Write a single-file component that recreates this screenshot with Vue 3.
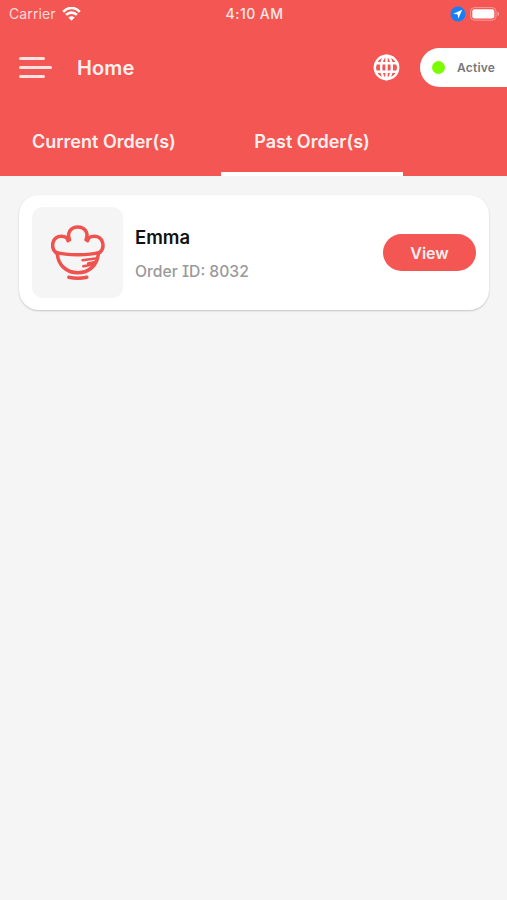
<template>
  <div class="screen">
    <header class="header">
      <div class="status-bar">
        <div class="carrier">
          <span class="carrier-name">Carrier</span>
          <svg class="wifi" width="19" height="14" viewBox="0 0 19 14">
            <path d="M1.2 4.8C6-.3 13-.3 17.8 4.8" />
            <path d="M4.1 7.9c3-3.1 7.8-3.1 10.8 0" />
            <path class="wifi-dot" d="M6.4 10.6c1.7-1.7 4.5-1.7 6.2 0L9.5 13.7z" />
          </svg>
        </div>
        <span class="time">4:10 AM</span>
        <div class="indicators">
          <svg width="16" height="16" viewBox="0 0 16 16">
            <circle cx="8" cy="8" r="7.5" fill="#147efb" />
            <path d="M12.2 3.8 3.3 7.7l4.4.7.6 4.3z" fill="#fff" />
          </svg>
          <svg width="30" height="14" viewBox="0 0 30 14">
            <rect x=".6" y=".6" width="25.4" height="12.6" rx="3.8" fill="none" stroke="#fff" stroke-opacity=".4" />
            <rect x="2.3" y="2.3" width="22" height="9.2" rx="2.2" fill="#fff" />
            <path d="M27.5 4.8c2 .7 2 3.6 0 4.3z" fill="#fff" fill-opacity=".5" />
          </svg>
        </div>
      </div>

      <div class="nav-bar">
        <button class="menu" aria-label="Menu">
          <span class="line short"></span>
          <span class="line"></span>
          <span class="line short"></span>
        </button>
        <h1 class="title">Home</h1>
        <svg class="globe" width="27" height="27" viewBox="0 0 27 27">
          <circle cx="13.5" cy="13.5" r="11.7" />
          <ellipse cx="13.5" cy="13.5" rx="5.4" ry="11.7" />
          <path d="M13.5 1.8v23.4M3 9.2h21M3 17.8h21" />
        </svg>
        <div class="availability">
          <span class="dot"></span>
          <span class="availability-label">Active</span>
        </div>
      </div>

      <nav class="tabs">
        <button
          v-for="tab in tabs"
          :key="tab.id"
          class="tab"
          :class="[tab.id, { selected: tab.id === selected }]"
          @click="selected = tab.id"
        >
          <span class="tab-label">{{ tab.label }}</span>
        </button>
      </nav>
    </header>

    <main class="orders">
      <article v-for="order in orders" :key="order.id" class="card">
        <div class="thumb">
          <svg class="bowl" width="54" height="58" viewBox="0 0 54 58">
            <path d="M4.8 28.4C-.8 23.5 1.2 12.2 10.4 12.2c3.6 0 6.2 1.7 6.6 4.6" />
            <path d="M18.6 15.6C15.6 9 19.8 2.9 26.8 2.9S38 9 35 15.6" />
            <path d="M36.6 16.8c.4-2.9 3-4.6 6.6-4.6 9.2 0 11.2 11.3 5.6 16.2" />
            <path d="M4.8 28.4c11 3.2 33 3.2 44 0" />
            <path d="M6.2 29C6.8 41 15.6 48.8 26.8 48.8S46.8 41 47.4 29" />
            <path class="shade" d="m31.4 36.2 15.2-2M37 39.4l8.4-1.8M32.2 42.3l11.2-2" />
            <path d="M17.8 53.2c5 1.1 13 1.1 18 0" />
          </svg>
        </div>
        <div class="details">
          <h2 class="name">{{ order.name }}</h2>
          <p class="order-id">Order ID: {{ order.id }}</p>
        </div>
        <button class="view">View</button>
      </article>
    </main>
  </div>
</template>

<script setup>
import { ref } from "vue";

const tabs = [
  { id: "current", label: "Current Order(s)" },
  { id: "past", label: "Past Order(s)" },
];
const selected = ref("past");

const orders = [{ id: 8032, name: "Emma" }];
</script>

<style>
body {
  background: #f5f5f5;
}
</style>

<style scoped>
.screen {
  min-height: 100vh;
  background: #f5f5f5;
  font-family: Inter, "Noto Sans", sans-serif;
}

button {
  border: 0;
  padding: 0;
  background: none;
  color: inherit;
  font-family: inherit;
}

svg {
  display: block;
}

.header {
  display: flex;
  flex-direction: column;
  height: 176px;
  background: #f45653;
  color: #fff;
}

.status-bar {
  display: grid;
  grid-template-columns: 1fr auto 1fr;
  align-items: center;
  height: 27px;
  padding: 0 7px 0 9px;
  font-size: 14px;
}

.carrier {
  display: flex;
  align-items: center;
  gap: 6px;
}

.carrier-name {
  color: #ffdcdb;
  letter-spacing: 0.1px;
}

.wifi {
  fill: none;
  stroke: #fff;
  stroke-width: 2.6;
}

.wifi .wifi-dot {
  fill: #fff;
  stroke: none;
}

.time {
  color: #ffe9e8;
  font-weight: 500;
  letter-spacing: 0.45px;
}

.indicators {
  display: flex;
  justify-content: flex-end;
  align-items: center;
  gap: 4px;
}

.nav-bar {
  display: flex;
  align-items: center;
  height: 80px;
  padding-left: 19px;
}

.menu {
  display: flex;
  flex-direction: column;
  gap: 6px;
  width: 33px;
}

.line {
  width: 33px;
  height: 3px;
  border-radius: 2px;
  background: #ffe2e1;
}

.line.short {
  width: 26px;
}

.title {
  flex: 1;
  margin: 2px 0 0 25px;
  color: #fff0ef;
  font-size: 20px;
  font-weight: 600;
  letter-spacing: 0.1px;
}

.globe {
  margin-right: 20px;
  fill: none;
  stroke: #fff;
  stroke-width: 2.4;
}

.availability {
  display: flex;
  align-items: center;
  box-sizing: border-box;
  width: 87px;
  height: 39px;
  padding-left: 12px;
  border-radius: 20px 0 0 20px;
  background: #fff;
}

.dot {
  width: 13px;
  height: 13px;
  border-radius: 50%;
  background: #7cfc00;
}

.availability-label {
  margin-left: 12px;
  color: #777;
  font-size: 12px;
  font-weight: 600;
  letter-spacing: 0.2px;
}

.tabs {
  display: flex;
  flex: 1;
}

.tab {
  padding-top: 4px;
  border-bottom: 4px solid transparent;
  color: #fff0ef;
  font-size: 18px;
  font-weight: 600;
  white-space: nowrap;
}

.tab.current {
  width: 221px;
  padding-left: 32px;
  text-align: left;
}

.tab.past {
  width: 182px;
}

.tab.selected {
  border-bottom-color: #fff;
}

.orders {
  padding: 19px 18px 0 19px;
}

.card {
  display: flex;
  align-items: center;
  box-sizing: border-box;
  height: 115px;
  padding: 0 13px;
  border-radius: 20px;
  background: #fff;
  box-shadow: 0 1px 2px rgba(0, 0, 0, 0.2);
}

.thumb {
  display: flex;
  justify-content: center;
  align-items: center;
  width: 91px;
  height: 91px;
  border-radius: 11px;
  background: #f5f5f5;
}

.bowl {
  fill: none;
  stroke: #ef5350;
  stroke-width: 3.5;
  stroke-linecap: round;
  stroke-linejoin: round;
}

.bowl .shade {
  stroke-width: 2.4;
}

.details {
  flex: 1;
  margin-left: 12px;
}

.name {
  margin: 3px 0 0;
  color: #111;
  font-size: 18.5px;
  font-weight: 600;
  line-height: 24px;
}

.order-id {
  margin: 11px 0 0;
  color: #999;
  font-size: 15.7px;
  font-weight: 500;
  font-feature-settings: "cv08";
  line-height: 24px;
}

.view {
  width: 93px;
  height: 37px;
  border-radius: 19px;
  background: #f45653;
  color: #fff0ef;
  font-size: 16px;
  font-weight: 600;
}
</style>
